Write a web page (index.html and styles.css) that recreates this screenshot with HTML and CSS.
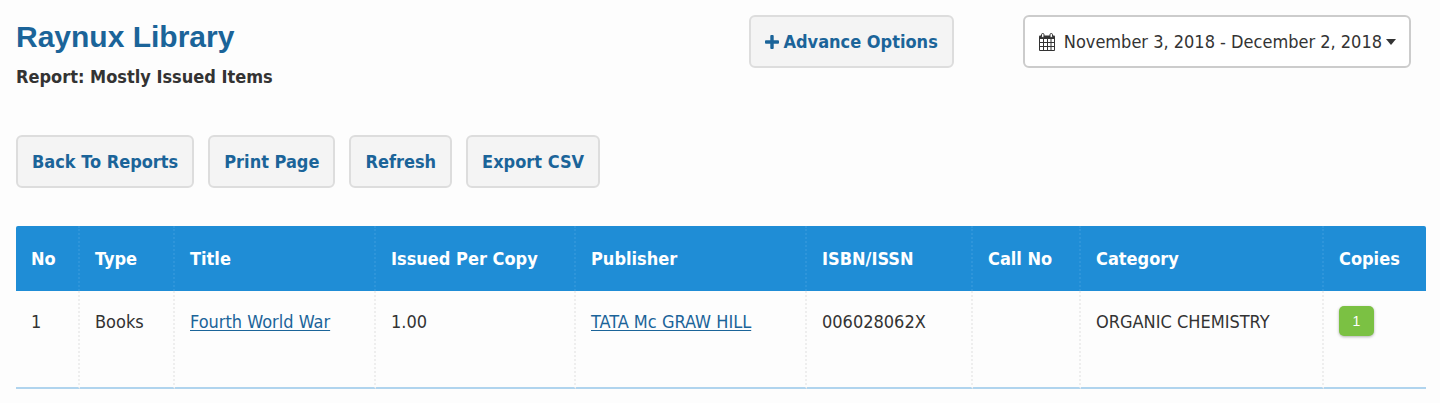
FILE: index.html
```html
<!DOCTYPE html>
<html lang="en">
<head>
<meta charset="utf-8">
<meta name="viewport" content="width=device-width, initial-scale=1">
<title>Raynux Library - Mostly Issued Items</title>
<link rel="stylesheet" href="styles.css">
</head>
<body>
<header class="header">
  <div class="heading">
    <h1 class="title">Raynux Library</h1>
    <h2 class="subtitle">Report: Mostly Issued Items</h2>
  </div>
  <button class="btn btn-icon" type="button">
    <svg class="icon-plus" viewBox="0 0 14 14" width="14" height="14" aria-hidden="true"><path d="M6.200 0h1.600q.9 0 .9.900v4.400h4.400q.9 0 .9.900v1.600q0 .9-.9.900H8.700v4.400q0 .9-.9.900H6.200q-.9 0-.9-.9V8.700H.9Q0 8.700 0 7.800V6.200q0-.9.900-.9h4.400V.9q0-.9.900-.9z"/></svg>
    Advance Options
  </button>
  <button class="range" type="button">
    <svg class="icon-calendar" viewBox="0 0 18 18" width="18" height="18" aria-hidden="true">
      <path class="cal-body" d="M1 3.500q0-1 1-1h14q1 0 1 1V6H1z"/>
      <path class="cal-grid" d="M1.500 5.500v12h15v-12M5.500 6v11M9.500 6v11M13 6v11M2 9.500h14M2 13.500h14"/>
      <rect class="cal-ring" x="3.500" y=".5" width="2.500" height="4" rx="1.200"/>
      <rect class="cal-ring" x="12" y=".5" width="2.500" height="4" rx="1.200"/>
    </svg>
    <span>November 3, 2018 - December 2, 2018</span>
    <svg class="icon-caret" viewBox="0 0 10 6" width="10" height="6" aria-hidden="true"><path d="M0 0h10L5 6z"/></svg>
  </button>
</header>
<nav class="actions">
  <button class="btn" type="button">Back To Reports</button>
  <button class="btn" type="button">Print Page</button>
  <button class="btn" type="button">Refresh</button>
  <button class="btn" type="button">Export CSV</button>
</nav>
<table class="report">
  <colgroup>
    <col class="c-no"><col class="c-type"><col class="c-title"><col class="c-issued"><col class="c-publisher"><col class="c-isbn"><col class="c-call"><col class="c-category"><col class="c-copies">
  </colgroup>
  <thead>
    <tr><th>No</th><th>Type</th><th>Title</th><th>Issued Per Copy</th><th>Publisher</th><th>ISBN/ISSN</th><th>Call No</th><th>Category</th><th>Copies</th></tr>
  </thead>
  <tbody>
    <tr><td>1</td><td>Books</td><td><a href="#">Fourth World War</a></td><td>1.00</td><td><a href="#">TATA Mc GRAW HILL</a></td><td>006028062X</td><td></td><td>ORGANIC CHEMISTRY</td><td><span class="badge">1</span></td></tr>
  </tbody>
</table>
</body>
</html>
```
FILE: styles.css
```css
* {
  box-sizing: border-box;
}

body {
  margin: 0;
  padding: 15px 14px 14px 16px;
  background: #fdfdfd;
  color: #333;
  font: 18px/24px Tahoma, "DejaVu Sans Condensed", sans-serif;
}

.header {
  display: grid;
  grid-template-columns: 1fr auto auto;
  column-gap: 69px;
  align-items: start;
  padding-right: 15px;
}

.title {
  margin: 4px 0 0;
  color: #1b6499;
  font: bold 30px/36px "Liberation Sans", Arial, sans-serif;
}

.subtitle {
  margin: 10px 0 0;
  font-size: 18px;
  line-height: 24px;
}

.btn,
.range {
  height: 53px;
  border: 2px solid #ddd;
  border-radius: 6px;
  padding: 0 14px;
  font: inherit;
  white-space: nowrap;
  cursor: pointer;
}

.btn {
  background: #f4f4f4;
  color: #1b6499;
  font-weight: bold;
}

.btn-icon {
  display: flex;
  align-items: center;
  gap: 4px;
}

.icon-plus {
  fill: #1b6499;
}

.range {
  display: flex;
  align-items: center;
  gap: 4px;
  border-color: #ccc;
  padding: 0 13px;
  background: #fff;
  color: #333;
}

.icon-calendar {
  margin-right: 4px;
}

.cal-body {
  fill: #333;
}

.cal-grid {
  fill: none;
  stroke: #333;
  stroke-width: 1;
}

.cal-ring {
  fill: #fff;
  stroke: #333;
}

.icon-caret {
  fill: #333;
}

.actions {
  display: flex;
  gap: 14px;
  margin: 46px 0 38px;
}

.report {
  width: 100%;
  table-layout: fixed;
  border-collapse: separate;
  border-spacing: 0;
}

.c-no { width: 64px; }
.c-type { width: 95px; }
.c-title { width: 201px; }
.c-issued { width: 200px; }
.c-publisher { width: 231px; }
.c-isbn { width: 166px; }
.c-call { width: 108px; }
.c-category { width: 243px; }
.c-copies { width: 102px; }

.report th,
.report td {
  padding: 0 15px;
  border-right: 2px dotted #eee;
  text-align: left;
  white-space: nowrap;
}

.report th {
  height: 65px;
  border-right-color: #2e95da;
  background: #1f8dd6;
  color: #fff;
}

.report td {
  height: 98px;
  padding-top: 15px;
  border-bottom: 2px solid #b0d4ee;
  line-height: 32px;
  vertical-align: top;
}

.report th:last-child,
.report td:last-child {
  border-right: 0;
}

.report th:first-child {
  border-top-left-radius: 2px;
}

.report th:last-child {
  border-top-right-radius: 2px;
}

.report a {
  color: #1b6499;
  text-underline-offset: 2px;
}

.badge {
  display: block;
  width: 35px;
  border-radius: 5px;
  background: #7bc143;
  box-shadow: 0 1px 3px rgba(0, 0, 0, 0.3);
  color: #fff;
  font: 14px/30px "Liberation Sans", Arial, sans-serif;
  text-align: center;
}
```
